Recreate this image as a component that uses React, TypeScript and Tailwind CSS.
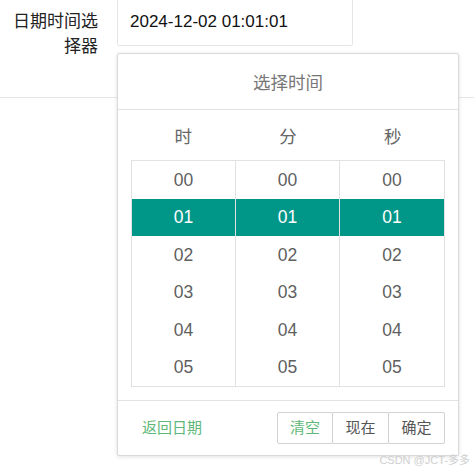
const HOURS = ['00', '01', '02', '03', '04', '05'];
const HEADS = ['时', '分', '秒'];
const SELECTED = '01';

function TimeColumn({ last }: { last?: boolean }) {
  return (
    <ul className={`flex flex-col ${last ? '' : 'border-r border-[#e2e2e2]'}`}>
      {HOURS.map((v) => (
        <li
          key={v}
          className={`flex h-[37.5px] items-center justify-center text-[17.5px] ${
            v === SELECTED ? 'bg-[#009688] text-white' : 'text-[#5f5f5f]'
          }`}
        >
          {v}
        </li>
      ))}
    </ul>
  );
}

export default function App() {
  return (
    <div
      className="relative h-[471px] w-[474px] overflow-hidden bg-white"
      style={{ fontFamily: '"Liberation Sans", "Noto Sans CJK SC", sans-serif' }}
    >
      {/* form row */}
      <div className="flex h-[98px] border-b border-[#e6e6e6]">
        <label className="w-[98px] pt-[9px] text-right text-[17px] leading-[25px] text-[#222]">
          日期时间选择器
        </label>
        <div className="ml-[19px] mt-[-2px] flex h-[48px] w-[236px] items-center rounded-[2px] border border-[#e6e6e6] pl-[12px] text-[17px] text-[#111]">
          2024-12-02 01:01:01
        </div>
      </div>

      {/* laydate popup */}
      <div className="absolute left-[117px] top-[53px] flex h-[403px] w-[342px] flex-col rounded-[2px] border border-[#d9d9d9] bg-white shadow-[0_1px_4px_rgba(0,0,0,0.12)]">
        <div className="flex h-[56px] shrink-0 items-center justify-center border-b border-[#e2e2e2] pt-[4px] text-[17.5px] text-[#777]">
          选择时间
        </div>
        <div className="px-[13px]">
          <div className="grid h-[50px] grid-cols-3 items-center pt-[4px] text-center text-[17.5px] text-[#666]">
            {HEADS.map((h) => (
              <span key={h}>{h}</span>
            ))}
          </div>
          <div className="grid grid-cols-3 border border-[#e2e2e2]">
            <TimeColumn />
            <TimeColumn />
            <TimeColumn last />
          </div>
        </div>
        <div className="mt-[13px] flex flex-1 items-center justify-between border-t border-[#e2e2e2] pl-[24px] pr-[13px] text-[15px]">
          <span className="text-[#5FB878]">返回日期</span>
          <div className="flex">
            <button className="h-[32px] w-[56px] rounded-[2px] border border-[#d2d2d2] text-[#5FB878]">清空</button>
            <button className="-ml-px h-[32px] w-[57px] rounded-[2px] border border-[#d2d2d2] text-[#555]">现在</button>
            <button className="-ml-px h-[32px] w-[57px] rounded-[2px] border border-[#d2d2d2] text-[#555]">确定</button>
          </div>
        </div>
      </div>

      <div className="absolute bottom-[3px] right-[4px] text-[11px] text-[#cfcfcf]">CSDN @JCT-多多</div>
    </div>
  );
}
